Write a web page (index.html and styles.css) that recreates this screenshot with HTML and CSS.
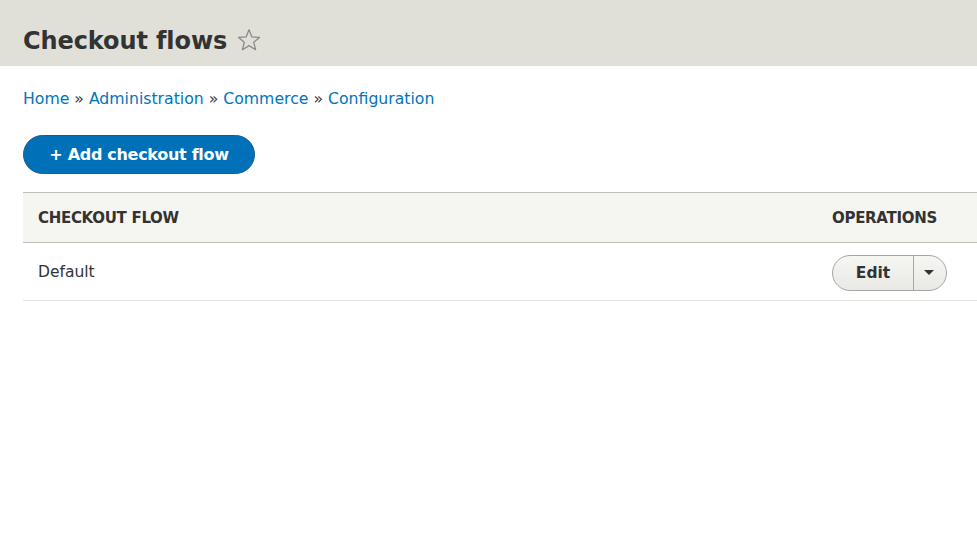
FILE: index.html
```html
<!DOCTYPE html>
<html>
<head>
<meta charset="utf-8">
<link rel="stylesheet" href="styles.css">
</head>
<body>
<header class="page-header">
  <h1 class="title">Checkout flows <span class="star"><svg width="24" height="24" viewBox="0 0 24 24"><path d="M12 1.8l2.9 7.1 7.6.5-5.8 4.9 1.9 7.4L12 17.6l-6.6 4.1 1.9-7.4-5.8-4.9 7.6-.5z" fill="none" stroke="#8a8a86" stroke-width="1.3" stroke-linejoin="round"/></svg></span></h1>
</header>
<main class="content">
  <nav class="breadcrumb">
    <a href="#">Home</a> » <a href="#">Administration</a> » <a href="#">Commerce</a> » <a href="#">Configuration</a>
  </nav>
  <a class="add-btn" href="#">+ Add checkout flow</a>
  <table class="flows">
    <thead>
      <tr><th class="c-name">Checkout flow</th><th class="c-ops">Operations</th></tr>
    </thead>
    <tbody>
      <tr>
        <td class="c-name">Default</td>
        <td class="c-ops">
          <div class="dropbutton">
            <a class="db-main" href="#">Edit</a>
            <span class="db-toggle"><span class="caret"></span></span>
          </div>
        </td>
      </tr>
    </tbody>
  </table>
</main>
</body>
</html>
```
FILE: styles.css
```css
html, body {
  margin: 0;
  padding: 0;
  background: #fff;
  font-family: "DejaVu Sans", "Liberation Sans", sans-serif;
  color: #333;
  overflow: hidden;
}
.page-header {
  background: #e0e0d8;
  height: 66px;
  box-sizing: border-box;
  padding: 23px 23px 0;
}
.title {
  margin: 0;
  font-size: 24px;
  font-weight: 700;
  color: #333;
  line-height: 36px;
  display: flex;
  align-items: center;
  letter-spacing: -0.1px;
}
.star {
  display: inline-flex;
  margin-left: 10px;
  margin-top: -2px;
}
.content {
  padding: 0 0 0 23px;
}
.breadcrumb {
  font-size: 15.7px;
  line-height: 20px;
  padding-top: 23px;
  color: #333;
}
.breadcrumb a {
  color: #0074bd;
  text-decoration: none;
}
.add-btn {
  display: inline-flex;
  align-items: center;
  justify-content: center;
  margin-top: 26px;
  width: 232px;
  height: 39px;
  box-sizing: border-box;
  border-radius: 20px;
  background: #0071b8;
  border: 1px solid #1e5c90;
  color: #fff;
  font-weight: 700;
  font-size: 16px;
  text-decoration: none;
  letter-spacing: -0.3px;
}
.flows {
  margin-top: 18px;
  border-collapse: collapse;
  width: 954px;
  table-layout: fixed;
  font-size: 15.5px;
}
.flows thead tr {
  background: #f5f5f2;
  border-top: 1px solid #bfbfba;
  border-bottom: 1px solid #bfbfba;
}
.flows th {
  text-align: left;
  text-transform: uppercase;
  font-weight: 700;
  font-size: 15px;
  height: 49px;
  padding: 0 15px;
  color: #333;
  letter-spacing: -0.3px;
}
.flows td {
  height: 57px;
  padding: 0 15px;
  border-bottom: 1px solid #e6e4df;
}
.flows .c-name {
  width: 764px;
}
.dropbutton {
  display: inline-flex;
  height: 36px;
  width: 115px;
  box-sizing: border-box;
  border: 1px solid #a6a6a6;
  border-radius: 18px;
  background: linear-gradient(#f6f6f3, #e8e8e4);
  overflow: hidden;
  vertical-align: middle;
  margin-top: 2px;
}
.db-main {
  flex: 1;
  display: flex;
  align-items: center;
  justify-content: center;
  color: #333;
  font-weight: 700;
  font-size: 15.5px;
  text-decoration: none;
  border-right: 1px solid #a6a6a6;
}
.db-toggle {
  width: 32px;
  display: flex;
  align-items: center;
  justify-content: center;
}
.caret {
  width: 0;
  height: 0;
  border-left: 5px solid transparent;
  border-right: 5px solid transparent;
  border-top: 5px solid #333;
  margin-left: -2px;
}
```
